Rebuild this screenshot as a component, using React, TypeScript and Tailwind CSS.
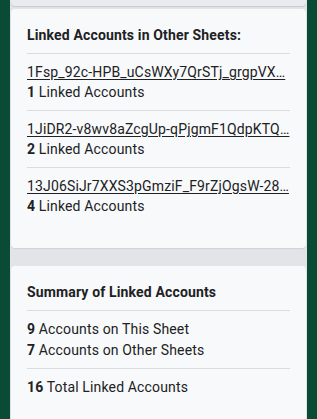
import React from 'react';

const SHEETS = [
  { id: '1Fsp_92c-HPB_uCsWXy7QrSTj_grgpVX…', count: 1 },
  { id: '1JiDR2-v8wv8aZcgUp-qPjgmF1QdpKTQ…', count: 2 },
  { id: '13J06SiJr7XXS3pGmziF_F9rZjOgsW-28…', count: 4 },
];

export default function App() {
  return (
    <div
      className="h-[419px] overflow-hidden bg-[#0b4a34] px-[10px] text-[14px] leading-5 tracking-[0.15px] text-[#202124]"
      style={{ fontFamily: 'Roboto, "Noto Sans", sans-serif' }}
    >
      <div className="flex h-full flex-col bg-[#e3e4e8] px-px">
        {/* tail of the card above */}
        <div className="h-[6px] rounded-b bg-[#eaebee] shadow-[0_1px_1px_rgba(0,0,0,0.12)]" />
        <div className="mt-[3px] rounded bg-[#f8f9fa] px-4 pt-4 pb-6 shadow-[0_1px_1px_rgba(0,0,0,0.08)]">
          <h3 className="pb-2 font-bold">Linked Accounts in Other Sheets:</h3>
          {SHEETS.map((s) => (
            <div key={s.id} className="border-t border-[#dadce0] py-2">
              <a className="block whitespace-nowrap underline underline-offset-2">{s.id}</a>
              <div>
                <span className="font-bold">{s.count}</span> Linked Accounts
              </div>
            </div>
          ))}
        </div>
        <div className="mt-[18px] flex-1 rounded-t bg-[#f8f9fa] px-4 pt-4 shadow-[0_1px_1px_rgba(0,0,0,0.08)]">
          <h3 className="pb-2 font-bold">Summary of Linked Accounts</h3>
          <div className="border-t border-[#dadce0] py-2">
            <div>
              <span className="font-bold">9</span> Accounts on This Sheet
            </div>
            <div className="mt-px">
              <span className="font-bold">7</span> Accounts on Other Sheets
            </div>
          </div>
          <div className="border-t border-[#dadce0] py-2">
            <span className="font-bold">16</span> Total Linked Accounts
          </div>
        </div>
      </div>
    </div>
  );
}
